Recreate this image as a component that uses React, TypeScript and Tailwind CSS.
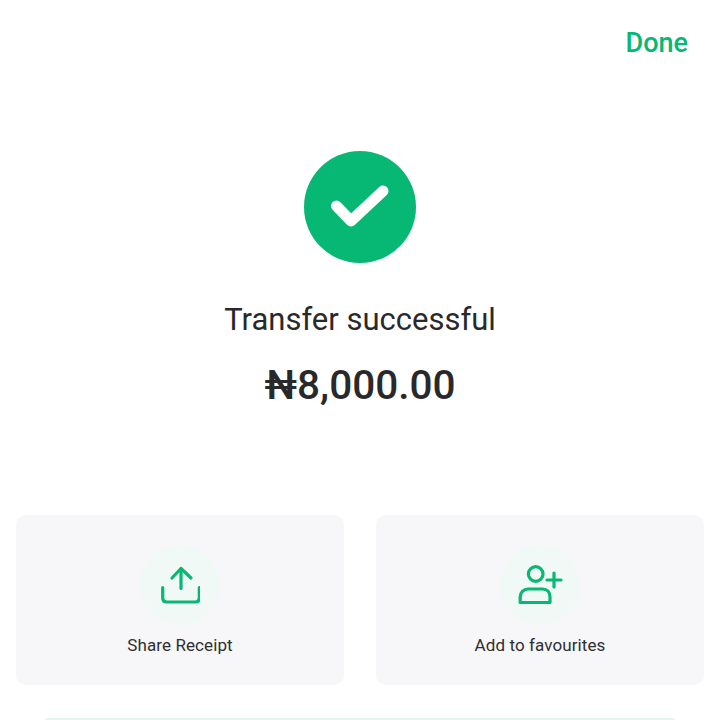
function UploadIcon() {
  return (
    <svg width="40" height="40" viewBox="0 0 40 40" fill="none" stroke="#06b873" strokeWidth="3.2" strokeLinecap="round" strokeLinejoin="round">
      <path d="M21 23.5V3.5" />
      <path d="M12 13L21 3.5L31 13" />
      <path d="M2.7 22.5V33C2.7 35.5 4 37 6.5 37H35.5C38 37 39.3 35.5 39.3 33V22.5" />
    </svg>
  )
}

function AddUserIcon() {
  return (
    <svg width="46" height="42" viewBox="0 0 46 42" fill="none" stroke="#06b873" strokeWidth="3.2" strokeLinecap="round" strokeLinejoin="round">
      <circle cx="18.7" cy="10" r="7.3" />
      <path d="M3.2 38.5V33C3.2 28 7 25 11 25H25.5C30 25 33 28 33 33V38.5Z" />
      <path d="M30 16H44" />
      <path d="M37 9V23" />
    </svg>
  )
}

function ActionCard({ label, icon }: { label: string; icon: React.ReactNode }) {
  return (
    <div className="flex h-[170px] flex-1 flex-col items-center rounded-[10px] bg-[#f7f7f9] pt-[30px]">
      <div className="flex h-20 w-20 items-center justify-center rounded-full bg-[#f0f9f5]">{icon}</div>
      <p className="mt-[10px] text-[17px] leading-[20px] tracking-[0.1px] text-[#2e2e30]">{label}</p>
    </div>
  )
}

export default function App() {
  return (
    <div className="flex h-[720px] w-[720px] flex-col overflow-hidden bg-white font-['Roboto',sans-serif]">
      <div className="flex justify-end pr-[32px] pt-[25px]">
        <span className="text-[27px] font-medium leading-[36px] text-[#06b873]">Done</span>
      </div>

      <div className="mt-[90px] flex flex-col items-center">
        <div className="flex h-28 w-28 items-center justify-center rounded-full bg-[#06b873]">
          <svg width="60" height="46" viewBox="0 0 60 46" fill="none" stroke="white" strokeWidth="11" strokeLinecap="round" strokeLinejoin="round">
            <path d="M6.5 22L21 37L53 7" />
          </svg>
        </div>
        <p className="mt-[37px] text-[31px] leading-[40px] text-[#29292b]">Transfer successful</p>
        <p className="mt-[19px] text-[40.5px] font-medium leading-[52px] text-[#29292b]">₦8,000.00</p>
      </div>

      <div className="mt-[104px] flex gap-8 px-4">
        <ActionCard label="Share Receipt" icon={<UploadIcon />} />
        <ActionCard label="Add to favourites" icon={<AddUserIcon />} />
      </div>

      <div className="mx-[45px] mt-[33px] h-4 rounded-t-[8px] bg-[#e3f7f0]" />
    </div>
  )
}
